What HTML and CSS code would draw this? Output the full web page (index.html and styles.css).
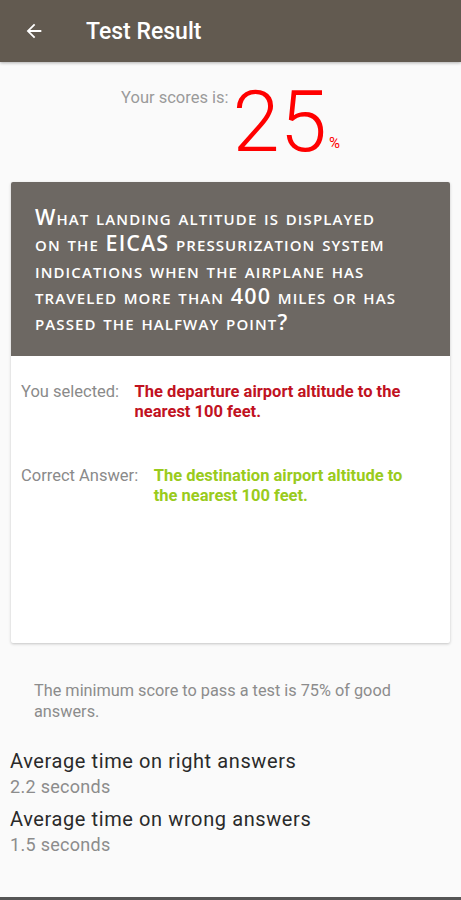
FILE: index.html
```html
<!DOCTYPE html>
<html>
<head>
<meta charset="utf-8">
<link rel="stylesheet" href="styles.css">
</head>
<body>
<div class="page">
  <header class="appbar">
    <svg class="back" width="22" height="22" viewBox="0 0 24 24"><path d="M20 11H7.83l5.59-5.59L12 4l-8 8 8 8 1.41-1.41L7.83 13H20v-2z" fill="#fff"/></svg>
    <h1 class="title">Test Result</h1>
  </header>

  <section class="score">
    <span class="score-label">Your scores is:</span>
    <span class="score-value">25</span>
    <span class="score-pct">%</span>
  </section>

  <article class="card">
    <div class="question"><p class="question-text">What landing altitude is displayed on the EICAS pressurization system indications when the airplane has traveled more than 400 miles or has passed the halfway point?</p></div>
    <div class="answers">
      <div class="answer-row">
        <span class="answer-label">You selected:</span>
        <span class="answer-text wrong">The departure airport altitude to the nearest 100 feet.</span>
      </div>
      <div class="answer-row">
        <span class="answer-label">Correct Answer:</span>
        <span class="answer-text right">The destination airport altitude to the nearest 100 feet.</span>
      </div>
    </div>
  </article>

  <p class="note">The minimum score to pass a test is 75% of good answers.</p>

  <div class="stats">
    <div class="stat">
      <div class="stat-title">Average time on right answers</div>
      <div class="stat-value">2.2 seconds</div>
    </div>
    <div class="stat">
      <div class="stat-title">Average time on wrong answers</div>
      <div class="stat-value">1.5 seconds</div>
    </div>
  </div>

  <div class="bottom-edge"></div>
</div>
</body>
</html>
```

FILE: styles.css
```css
* { box-sizing: border-box; }
html, body { margin: 0; padding: 0; }
body {
  background: #fafafa;
  font-family: Roboto, "Liberation Sans", sans-serif;
  width: 461px;
  height: 900px;
  overflow: hidden;
}
.page {
  display: flex;
  flex-direction: column;
  height: 900px;
}
.appbar {
  height: 62px;
  background: #625a50;
  display: flex;
  align-items: center;
  padding-left: 23px;
  box-shadow: 0 1px 3px rgba(0,0,0,0.3);
  flex-shrink: 0;
}
.back { display: block; }
.title {
  margin: 0 0 0 41px;
  color: #fff;
  font-size: 23px;
  font-weight: 500;
}
.score {
  height: 120px;
  display: flex;
  justify-content: center;
  align-items: flex-start;
  padding-top: 18px;
  flex-shrink: 0;
}
.score-label {
  color: #9a9a9a;
  font-size: 16.5px;
  margin-top: 8px;
  margin-right: 4px;
}
.score-value {
  color: #ff0000;
  font-size: 85px;
  font-weight: 300;
  line-height: 85px;
}
.score-pct {
  color: #ff0000;
  font-size: 15px;
  margin-top: 54px;
  margin-left: 2px;
}
.card {
  margin: 0 11px;
  height: 461px;
  background: #fff;
  box-shadow: 0 1px 3px rgba(0,0,0,0.22);
  border-radius: 2px;
  display: flex;
  flex-direction: column;
  flex-shrink: 0;
}
.question {
  background: #6d6863;
  color: #fff;
  height: 174px;
  padding: 22px 0 0 24px;
  border-radius: 2px 2px 0 0;
}
.question-text {
  margin: 0;
  width: 366px;
  font-family: "Open Sans", Lato, sans-serif;
  font-variant: small-caps;
  font-weight: 600;
  font-size: 21.5px;
  line-height: 26.3px;
  letter-spacing: 1.1px;
}
.answers {
  padding: 26px 10px 0 10px;
  display: flex;
  flex-direction: column;
  gap: 44px;
}
.answer-row {
  display: flex;
  align-items: flex-start;
  font-size: 16.5px;
  line-height: 20px;
}
.answer-label {
  color: #8a8a8a;
  margin-right: 15.5px;
  white-space: nowrap;
}
.answer-text {
  font-weight: 700;
  width: 272px;
}
.wrong { color: #c1121f; }
.right { color: #9acb1c; }
.note {
  margin: 37px 40px 0 34px;
  color: #8c8c8c;
  font-size: 16.3px;
  line-height: 21px;
}
.stats {
  margin: 26px 10px 0 10px;
  display: flex;
  flex-direction: column;
  gap: 6px;
}
.stat-title {
  color: #2a2a2a;
  font-size: 20px;
  line-height: 26px;
  letter-spacing: 0.6px;
}
.stat-value {
  color: #8c8c8c;
  font-size: 18px;
  line-height: 26px;
  letter-spacing: 0.3px;
}
.bottom-edge {
  margin-top: auto;
  height: 3px;
  background: #555;
  flex-shrink: 0;
}
```
